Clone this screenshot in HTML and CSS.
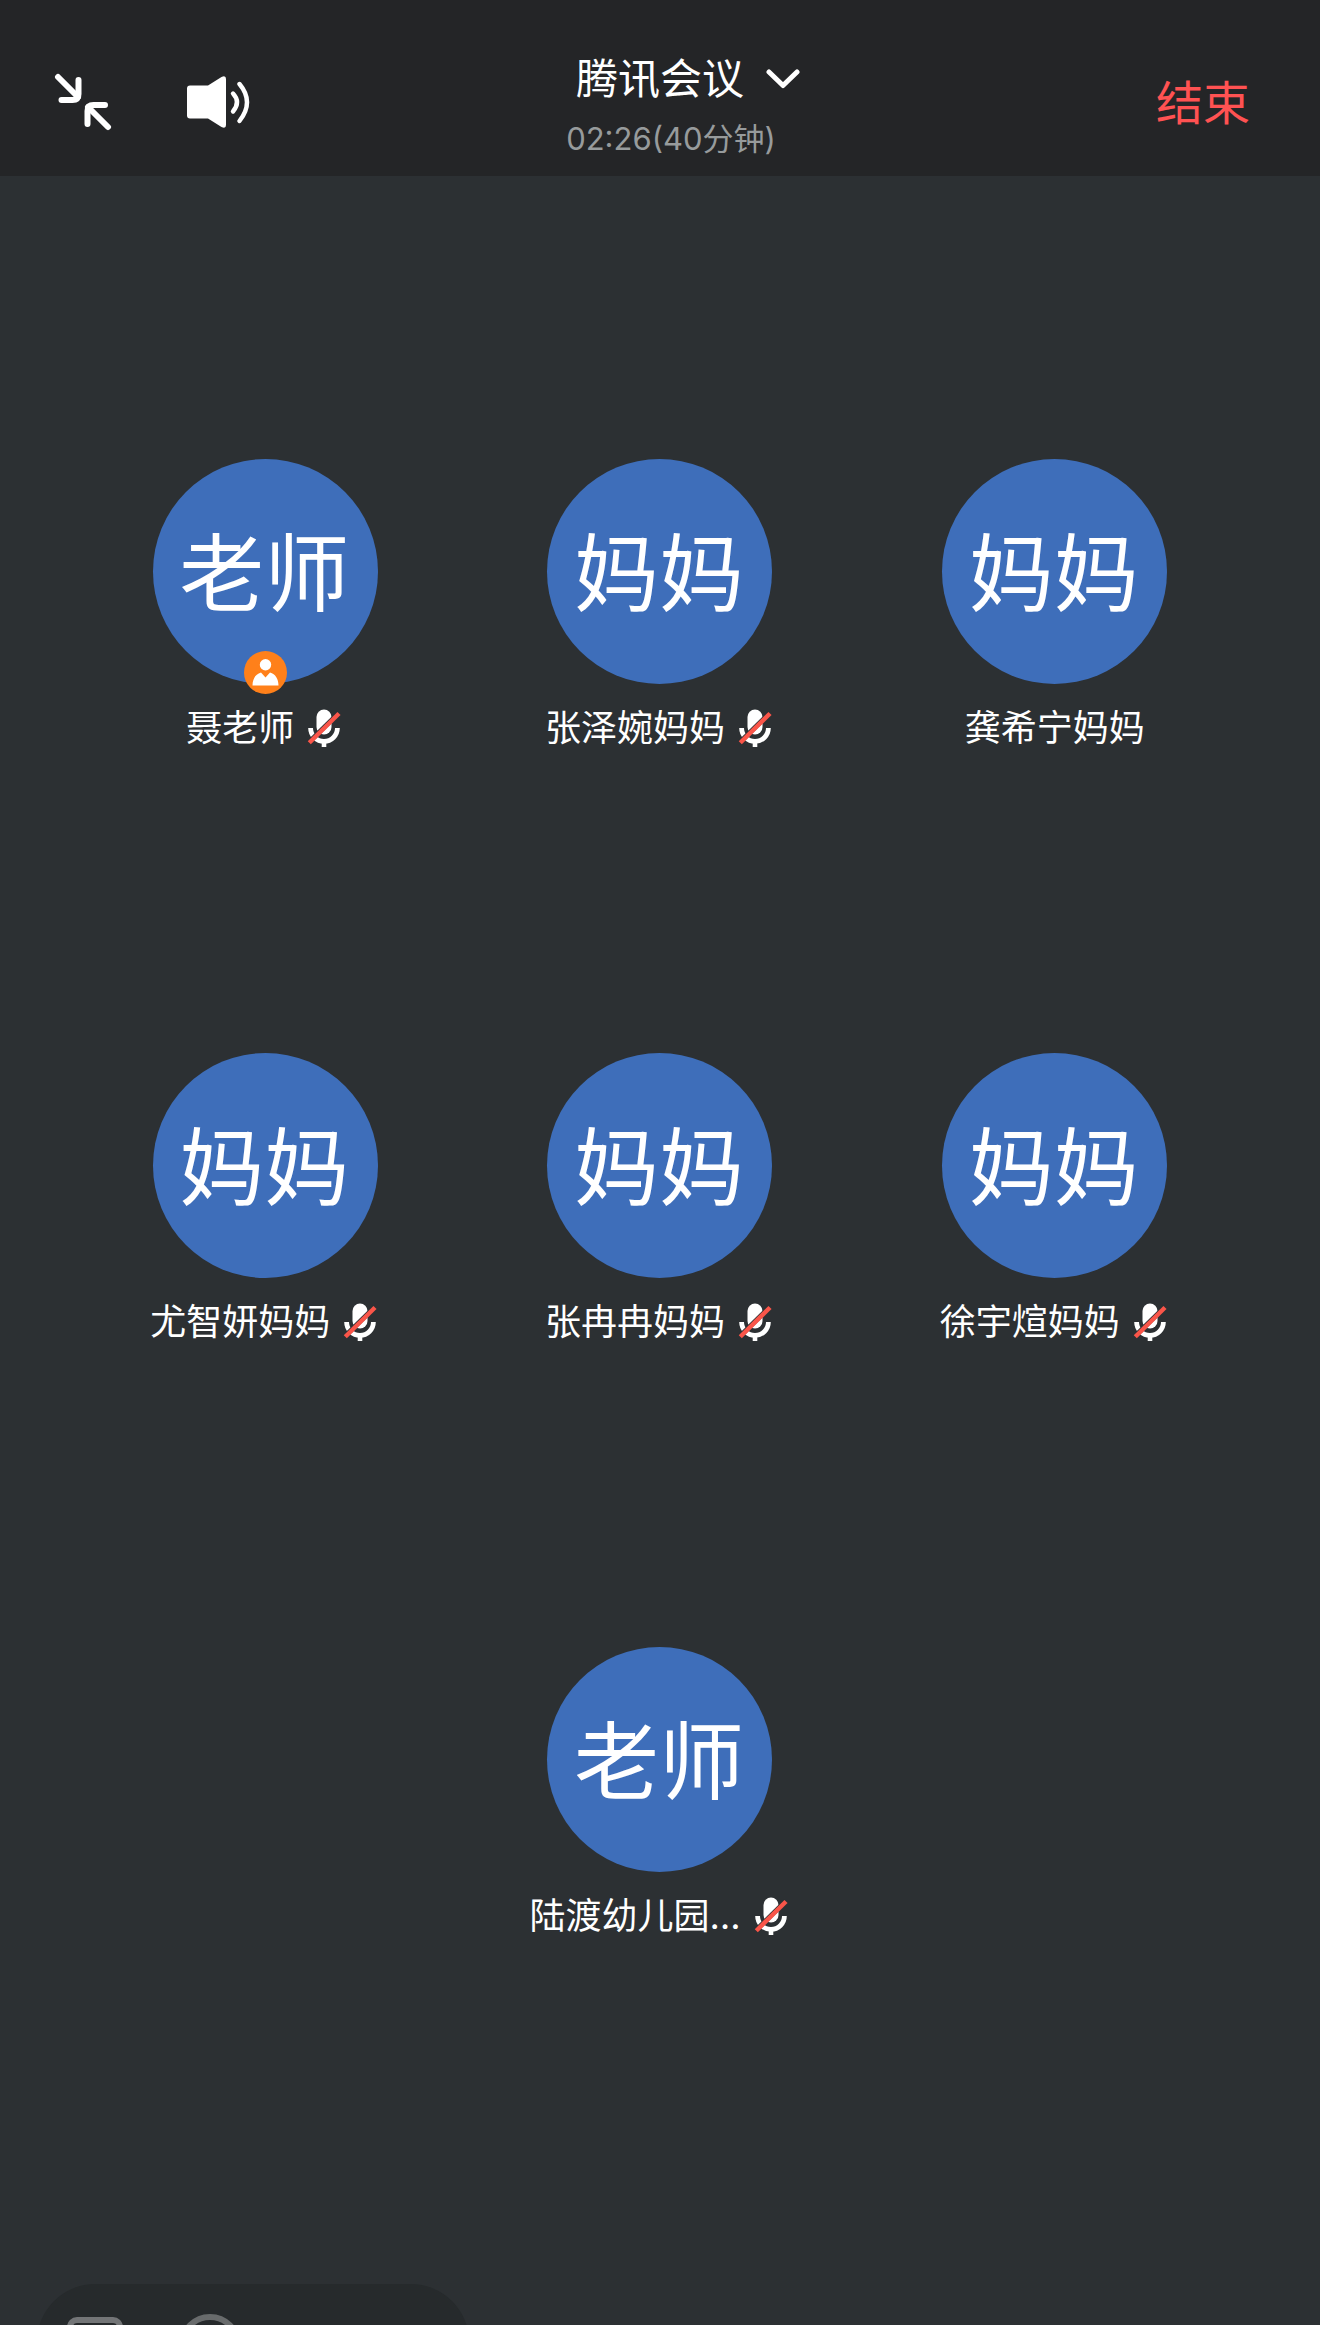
FILE: index.html
```html
<!DOCTYPE html>
<html lang="zh-CN">
<head>
  <meta charset="utf-8">
  <meta name="viewport" content="width=device-width, initial-scale=1">
  <title>腾讯会议</title>
  <link rel="stylesheet" href="styles.css">
</head>
<body>
  <svg class="symbols" aria-hidden="true">
    <symbol id="mic-off" viewBox="0 0 36 38">
      <path d="M10.500 8a7.500 7.500 0 0 1 15 0v10a7.500 7.500 0 0 1-15 0z" fill="#fff"/>
      <path d="M4.600 19a13.400 13.400 0 0 0 26.800 0" fill="none" stroke="#fff" stroke-width="4.800"/>
      <path d="M18 31v7" stroke="#fff" stroke-width="4.600"/>
      <path d="M2.900 33.300L32.600 4.100" stroke="#2c3033" stroke-width="4.800"/>
      <path d="M3.300 33.700L33 4.500" stroke="#fa5549" stroke-width="4.400"/>
    </symbol>
  </svg>

  <header class="topbar">
    <div class="topbar-left">
      <button class="icon-btn" type="button" aria-label="最小化">
        <svg width="58" height="58" viewBox="0 0 58 58" fill="none" stroke="#fff" stroke-width="6" stroke-linecap="round" stroke-linejoin="round">
          <path d="M4 4l20 20"/>
          <path d="M24.500 7v14q0 6-6 6H7.500"/>
          <path d="M54 54L34 34"/>
          <path d="M33.500 51V38q0-6 6-6H51"/>
        </svg>
      </button>
      <button class="icon-btn" type="button" aria-label="扬声器">
        <svg width="64" height="58" viewBox="0 0 64 58" fill="none" stroke="#fff" stroke-linecap="round">
          <path d="M3 12.500h18L34.500 4q4.500-2 4.500 2v46q0 4-4.500 2L21 45.500H3q-3 0-3-3v-27q0-3 3-3z" fill="#fff" stroke="none"/>
          <path d="M46 20.500q8 8.500 0 18" stroke-width="4.400"/>
          <path d="M52.500 11q15 18 0 37" stroke-width="4.400"/>
        </svg>
      </button>
    </div>

    <div class="meeting">
      <button class="meeting-title" type="button">
        腾讯会议
        <svg width="34" height="20" viewBox="0 0 34 20" fill="none" stroke="#fff" stroke-width="5" stroke-linecap="round" stroke-linejoin="round">
          <path d="M3 3l14 13.500L31 3"/>
        </svg>
      </button>
      <div class="meeting-time">02:26(40分钟)</div>
    </div>

    <button class="end-btn" type="button">结束</button>
  </header>

  <main class="members">
    <div class="member">
      <div class="avatar">老师
        <svg class="host" viewBox="0 0 43 43">
          <circle cx="21.500" cy="21.500" r="21.500" fill="#ff801a"/>
          <circle cx="21.500" cy="13.700" r="5.700" fill="#fff"/>
          <path d="M8.500 34.500c0-6.500 3-11.500 8.500-13l4.500 5 4.500-5c5.500 1.500 8.500 6.500 8.500 13z" fill="#fff"/>
        </svg>
      </div>
      <div class="name">聂老师<svg class="mic"><use href="#mic-off"/></svg></div>
    </div>
    <div class="member">
      <div class="avatar">妈妈</div>
      <div class="name">张泽婉妈妈<svg class="mic"><use href="#mic-off"/></svg></div>
    </div>
    <div class="member">
      <div class="avatar">妈妈</div>
      <div class="name">龚希宁妈妈</div>
    </div>
    <div class="member">
      <div class="avatar">妈妈</div>
      <div class="name">尤智妍妈妈<svg class="mic"><use href="#mic-off"/></svg></div>
    </div>
    <div class="member">
      <div class="avatar">妈妈</div>
      <div class="name">张冉冉妈妈<svg class="mic"><use href="#mic-off"/></svg></div>
    </div>
    <div class="member">
      <div class="avatar">妈妈</div>
      <div class="name">徐宇煊妈妈<svg class="mic"><use href="#mic-off"/></svg></div>
    </div>
    <div class="member last">
      <div class="avatar">老师</div>
      <div class="name">陆渡幼儿园…<svg class="mic"><use href="#mic-off"/></svg></div>
    </div>
  </main>

  <footer class="dock">
    <div class="dock-panel">
      <button class="icon-btn" type="button" aria-label="聊天">
        <svg width="56" height="56" viewBox="0 0 56 56" fill="none" stroke="#737577" stroke-width="6">
          <rect x="3" y="3" width="50" height="46" rx="7"/>
        </svg>
      </button>
      <button class="icon-btn" type="button" aria-label="表情">
        <svg width="62" height="62" viewBox="0 0 62 62" fill="none" stroke="#686b6c" stroke-width="6">
          <circle cx="31" cy="31" r="28"/>
        </svg>
      </button>
    </div>
  </footer>
</body>
</html>
```

FILE: styles.css
```css
* {
  box-sizing: border-box;
}
body {
  margin: 0;
  min-height: 100vh;
  display: flex;
  flex-direction: column;
  background-color: #2c3033;
  color: #fff;
  font-family: Inter, "Noto Sans CJK SC", sans-serif;
}
button {
  padding: 0;
  border: none;
  background: none;
  color: inherit;
  font-family: inherit;
  cursor: pointer;
}
svg {
  display: block;
  flex-shrink: 0;
}
.symbols {
  display: none;
}

/* top bar */
.topbar {
  display: grid;
  grid-template-columns: 1fr auto 1fr;
  align-items: center;
  height: 176px;
  padding: 28px 70px 0 54px;
  background-color: #242527;
}
.topbar-left {
  display: flex;
  gap: 75px;
}
.meeting {
  display: flex;
  flex-direction: column;
  align-items: center;
  gap: 8px;
  padding: 6px 0 0 38px;
}
.meeting-title {
  display: flex;
  align-items: center;
  gap: 22px;
  padding-left: 34px;
  font-size: 42px;
  line-height: 60px;
}
.meeting-time {
  color: #979b9c;
  font-size: 31px;
  line-height: 44px;
}
.end-btn {
  justify-self: end;
  padding-top: 2px;
  color: #ff5252;
  font-size: 47px;
  line-height: 60px;
}

/* participants */
.members {
  display: grid;
  grid-template-columns: repeat(3, 1fr);
  row-gap: 303px;
  padding: 283px 68px 0;
}
.member {
  display: flex;
  flex-direction: column;
  align-items: center;
  gap: 22px;
}
.last {
  grid-column: 2;
}
.avatar {
  position: relative;
  display: flex;
  align-items: center;
  justify-content: center;
  width: 225px;
  height: 225px;
  padding: 6px 2px 0 0;
  border-radius: 50%;
  background-color: #3e6eba;
  font-size: 85px;
  line-height: 120px;
}
.host {
  position: absolute;
  left: 91px;
  bottom: -10px;
  width: 43px;
  height: 43px;
}
.name {
  display: flex;
  align-items: center;
  gap: 12px;
  font-size: 36px;
  line-height: 44px;
  white-space: nowrap;
}
.mic {
  width: 36px;
  height: 38px;
  margin-right: 2px;
}

/* bottom dock, only its top edge is in view */
.dock {
  height: 41px;
  margin-top: auto;
  padding-left: 37px;
  overflow: hidden;
}
.dock-panel {
  display: flex;
  align-items: center;
  gap: 56px;
  width: 432px;
  height: 122px;
  padding-left: 30px;
  border-radius: 58px;
  background-color: #262a2c;
}
```
